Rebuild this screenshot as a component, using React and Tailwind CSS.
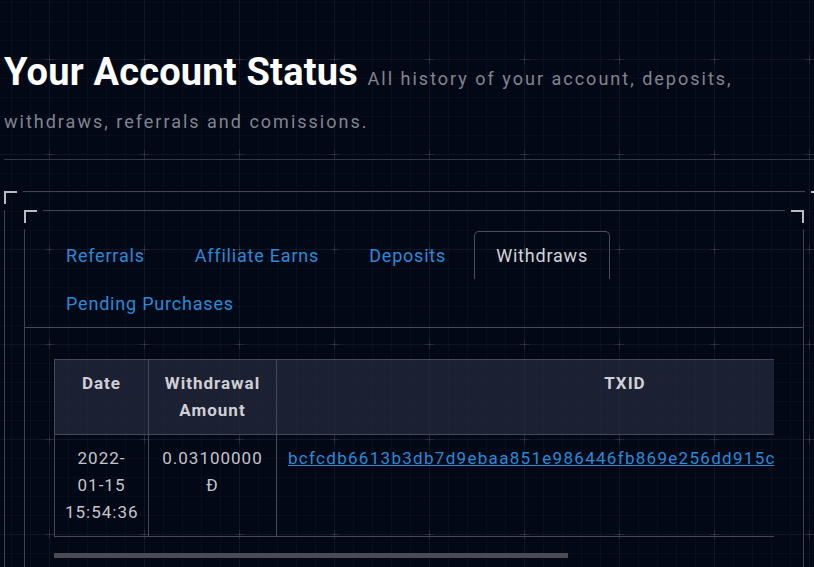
const TABS = ["Referrals", "Affiliate Earns", "Deposits", "Withdraws", "Pending Purchases"];

const TXID = "bcfcdb6613b3db7d9ebaa851e986446fb869e256dd915c3a7e0f1b92d4c58e6a";

function GridBackdrop() {
  return (
    <svg className="pointer-events-none absolute inset-0 h-full w-full" aria-hidden="true">
      <defs>
        <pattern id="grid" width="95" height="95" x="2" y="12" patternUnits="userSpaceOnUse">
          <path
            d="M9.5 0V95M28.5 0V95M66.5 0V95M85.5 0V95M0 9.5H95M0 28.5H95M0 66.5H95M0 85.5H95"
            stroke="#ffffff"
            strokeOpacity="0.025"
          />
          <path d="M47.5 0V95M0 47.5H95" stroke="#ffffff" strokeOpacity="0.05" />
          <path d="M47.5 43V52M43 47.5H52" stroke="#ffffff" strokeOpacity="0.09" />
        </pattern>
      </defs>
      <rect width="100%" height="100%" fill="url(#grid)" />
    </svg>
  );
}

// box with bracket corners and broken edge lines
function Frame({ className = "", children }) {
  return (
    <div className={`relative ${className}`}>
      <span className="pointer-events-none absolute left-0 top-0 h-[13px] w-[13px] border-l-2 border-t-2 border-[#b9bbc3]" />
      <span className="pointer-events-none absolute right-0 top-0 h-[13px] w-[13px] border-r-2 border-t-2 border-[#b9bbc3]" />
      <span className="pointer-events-none absolute bottom-0 left-0 h-[13px] w-[13px] border-b-2 border-l-2 border-[#b9bbc3]" />
      <span className="pointer-events-none absolute bottom-0 right-0 h-[13px] w-[13px] border-b-2 border-r-2 border-[#b9bbc3]" />
      <span className="pointer-events-none absolute left-[19px] right-[19px] top-0 h-px bg-[#3f4253]" />
      <span className="pointer-events-none absolute bottom-0 left-[19px] right-[19px] h-px bg-[#3f4253]" />
      <span className="pointer-events-none absolute bottom-[19px] left-0 top-[19px] w-px bg-[#3f4253]" />
      <span className="pointer-events-none absolute bottom-[19px] right-0 top-[19px] w-px bg-[#3f4253]" />
      {children}
    </div>
  );
}

export default function App() {
  const active = "Withdraws";

  return (
    <div className="relative min-h-screen overflow-hidden bg-[#030817] font-['Roboto',sans-serif]">
      <GridBackdrop />

      <div className="relative ml-[4px] w-[820px] pb-10 pt-[51px]">
        <h1 className="text-[38px] font-bold leading-[43px] tracking-[0.2px] text-white">
          Your Account Status{" "}
          <span className="text-[18px] font-normal leading-none tracking-[2px] text-[#82858f]">
            All history of your account, deposits, withdraws, referrals and comissions.
          </span>
        </h1>

        <hr className="mt-[22px] border-t border-[#33364a]" />

        <Frame className="mt-[31px] px-[20px] pb-[20px] pt-[19px]">
          <Frame className="pb-[30px] pt-[21px]">
            <nav className="flex flex-wrap gap-x-[6px] border-b border-[#46495a] pl-[20px]">
              {TABS.map((tab) => (
                <button
                  key={tab}
                  type="button"
                  className={[
                    "flex h-[48px] items-center rounded-t-[5px] border border-b-0 px-[21px] text-[18px] tracking-[0.8px]",
                    tab === active
                      ? "border-[#4a4d5e] text-[#d2d3d8]"
                      : "border-transparent text-[#2b8ad8]",
                  ].join(" ")}
                >
                  {tab}
                </button>
              ))}
            </nav>

            <div className="px-[30px] pt-[31px]">
              <div className="overflow-hidden">
                <table className="w-[919px] table-fixed border-collapse text-[17px] leading-[27px] tracking-[1px]">
                  <colgroup>
                    <col className="w-[94px]" />
                    <col className="w-[128px]" />
                    <col className="w-[697px]" />
                  </colgroup>
                  <thead>
                    <tr className="bg-[rgba(45,49,70,0.6)] text-[#cfd0d5]">
                      <th className="border border-[#45485a] px-[10px] py-[10px] align-top font-bold">Date</th>
                      <th className="border border-[#45485a] px-[10px] py-[10px] align-top font-bold">
                        Withdrawal Amount
                      </th>
                      <th className="border border-[#45485a] px-[11px] py-[10px] align-top font-bold">TXID</th>
                    </tr>
                  </thead>
                  <tbody className="text-[#c4c5cb]">
                    <tr>
                      <td className="border border-[#45485a] px-[10px] py-[10px] text-center align-top">
                        2022-01-15 15:54:36
                      </td>
                      <td className="border border-[#45485a] px-[10px] py-[10px] text-center align-top">
                        0.03100000 Đ
                      </td>
                      <td className="whitespace-nowrap border border-[#45485a] px-[11px] py-[10px] text-left align-top">
                        <a href="#" className="text-[#2b8ad8] underline tracking-[1.3px]">
                          {TXID}
                        </a>
                      </td>
                    </tr>
                  </tbody>
                </table>
              </div>
              <div className="mt-[16px] h-[5px] w-[514px] bg-[#4b4c53]" />
            </div>
          </Frame>
        </Frame>
      </div>
    </div>
  );
}
